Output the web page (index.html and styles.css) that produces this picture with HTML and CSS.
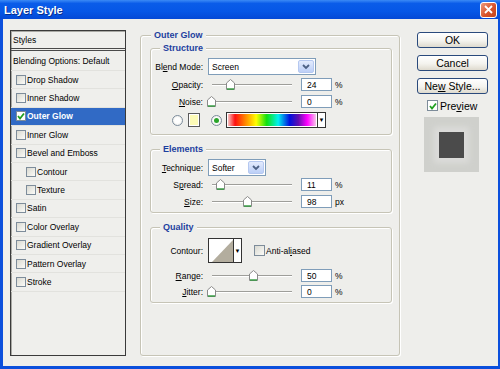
FILE: index.html
```html
<!DOCTYPE html>
<html lang="en">
<head>
  <meta charset="UTF-8" />
  <title>Layer Style</title>
  <link rel="stylesheet" href="styles.css">
</head>
<body>
  <div class="window">
    <div class="titlebar">
      <span class="title">Layer Style</span>
      <span class="close">
        <svg width="9" height="9" viewBox="0 0 9 9"><path d="M1 1 L8 8 M8 1 L1 8" stroke="#fff" stroke-width="1.8" fill="none"/></svg>
      </span>
    </div>

    <div class="dialog">
      <!-- Styles list -->
      <ul class="style-list">
        <li class="head first">Styles</li>
        <li class="head">Blending Options: Default</li>
        <li><span class="check"></span>Drop Shadow</li>
        <li><span class="check"></span>Inner Shadow</li>
        <li class="selected"><span class="check on"><svg width="8" height="8" viewBox="0 0 8 8"><path d="M1 4 L3 6.5 L7 1.5" stroke="#21a121" stroke-width="1.8" fill="none"/></svg></span>Outer Glow</li>
        <li><span class="check"></span>Inner Glow</li>
        <li><span class="check"></span>Bevel and Emboss</li>
        <li class="sub"><span class="check"></span>Contour</li>
        <li class="sub"><span class="check"></span>Texture</li>
        <li><span class="check"></span>Satin</li>
        <li><span class="check"></span>Color Overlay</li>
        <li><span class="check"></span>Gradient Overlay</li>
        <li><span class="check"></span>Pattern Overlay</li>
        <li><span class="check"></span>Stroke</li>
      </ul>

      <!-- Outer Glow settings -->
      <div class="main">
        <span class="group-title">Outer Glow</span>

        <div class="group">
          <span class="group-title">Structure</span>
          <div class="row tall">
            <label class="lbl">Bl<u>e</u>nd Mode:</label>
            <div class="select blend">
              <span class="val">Screen</span>
              <span class="drop"><svg width="8" height="6" viewBox="0 0 8 6"><path d="M1 1 L4 4 L7 1" stroke="#4d6185" stroke-width="1.8" fill="none"/></svg></span>
            </div>
          </div>
          <div class="row gap3">
            <label class="lbl"><u>O</u>pacity:</label>
            <div class="slider"><span class="track"></span><svg class="thumb" style="left:17.5px" width="9" height="11" viewBox="0 0 9 11"><path d="M0.5 4 L4.5 0.5 L8.5 4 L8.5 10.5 L0.5 10.5 Z" fill="#fff" stroke="#8a8a8a"/><path d="M1 10 L8 10" stroke="#2f9a3c" stroke-width="1.4"/></svg></div>
            <span class="num">24</span><span class="unit">%</span>
          </div>
          <div class="row">
            <label class="lbl"><u>N</u>oise:</label>
            <div class="slider"><span class="track"></span><svg class="thumb" style="left:-1.5px" width="9" height="11" viewBox="0 0 9 11"><path d="M0.5 4 L4.5 0.5 L8.5 4 L8.5 10.5 L0.5 10.5 Z" fill="#fff" stroke="#8a8a8a"/><path d="M1 10 L8 10" stroke="#2f9a3c" stroke-width="1.4"/></svg></div>
            <span class="num">0</span><span class="unit">%</span>
          </div>
          <div class="row colors">
            <span class="radio"></span>
            <span class="swatch"></span>
            <span class="radio on"></span>
            <div class="gradient">
              <span class="spectrum"></span>
              <span class="arrow">&#9660;</span>
            </div>
          </div>
        </div>

        <div class="group">
          <span class="group-title">Elements</span>
          <div class="row tall">
            <label class="lbl"><u>T</u>echnique:</label>
            <div class="select technique">
              <span class="val">Softer</span>
              <span class="drop"><svg width="8" height="6" viewBox="0 0 8 6"><path d="M1 1 L4 4 L7 1" stroke="#4d6185" stroke-width="1.8" fill="none"/></svg></span>
            </div>
          </div>
          <div class="row gap2">
            <label class="lbl">S<u>p</u>read:</label>
            <div class="slider"><span class="track"></span><svg class="thumb" style="left:7.5px" width="9" height="11" viewBox="0 0 9 11"><path d="M0.5 4 L4.5 0.5 L8.5 4 L8.5 10.5 L0.5 10.5 Z" fill="#fff" stroke="#8a8a8a"/><path d="M1 10 L8 10" stroke="#2f9a3c" stroke-width="1.4"/></svg></div>
            <span class="num">11</span><span class="unit">%</span>
          </div>
          <div class="row">
            <label class="lbl"><u>S</u>ize:</label>
            <div class="slider"><span class="track"></span><svg class="thumb" style="left:34.5px" width="9" height="11" viewBox="0 0 9 11"><path d="M0.5 4 L4.5 0.5 L8.5 4 L8.5 10.5 L0.5 10.5 Z" fill="#fff" stroke="#8a8a8a"/><path d="M1 10 L8 10" stroke="#2f9a3c" stroke-width="1.4"/></svg></div>
            <span class="num">98</span><span class="unit">px</span>
          </div>
        </div>

        <div class="group">
          <span class="group-title">Quality</span>
          <div class="row contour-row">
            <label class="lbl">Contour:</label>
            <div class="contour">
              <svg width="24" height="23" viewBox="0 0 24 23"><path d="M3 23 L24 1 L24 23 Z" fill="#b3ad9e"/></svg>
              <span class="arrow">&#9660;</span>
            </div>
            <span class="check anti"></span><span>Anti-al<u>i</u>ased</span>
          </div>
          <div class="row gap6">
            <label class="lbl"><u>R</u>ange:</label>
            <div class="slider"><span class="track"></span><svg class="thumb" style="left:40.5px" width="9" height="11" viewBox="0 0 9 11"><path d="M0.5 4 L4.5 0.5 L8.5 4 L8.5 10.5 L0.5 10.5 Z" fill="#fff" stroke="#8a8a8a"/><path d="M1 10 L8 10" stroke="#2f9a3c" stroke-width="1.4"/></svg></div>
            <span class="num">50</span><span class="unit">%</span>
          </div>
          <div class="row gap3">
            <label class="lbl"><u>J</u>itter:</label>
            <div class="slider"><span class="track"></span><svg class="thumb" style="left:-1.5px" width="9" height="11" viewBox="0 0 9 11"><path d="M0.5 4 L4.5 0.5 L8.5 4 L8.5 10.5 L0.5 10.5 Z" fill="#fff" stroke="#8a8a8a"/><path d="M1 10 L8 10" stroke="#2f9a3c" stroke-width="1.4"/></svg></div>
            <span class="num">0</span><span class="unit">%</span>
          </div>
        </div>
      </div>

      <!-- Buttons and preview -->
      <div class="side">
        <button class="btn"><span>OK</span></button>
        <button class="btn"><span>Cancel</span></button>
        <button class="btn last"><span>Ne<u>w</u> Style...</span></button>
        <div class="preview-row">
          <span class="check on"><svg width="8" height="8" viewBox="0 0 8 8"><path d="M1 4 L3 6.5 L7 1.5" stroke="#21a121" stroke-width="1.8" fill="none"/></svg></span>
          <span>Pre<u>v</u>iew</span>
        </div>
        <div class="preview"><span class="preview-square"></span></div>
      </div>
    </div>
  </div>
</body>
</html>
```

FILE: styles.css
```css
/* Reset */
* {
  margin: 0;
  padding: 0;
  box-sizing: border-box;
}
body {
  font-family: 'Liberation Sans', Arial, sans-serif;
  font-size: 8.5px;
  color: #000;
  background: #fff;
}
u {
  text-underline-offset: 1px;
}

/* Window frame */
.window {
  width: 500px;
  height: 369px;
  background: #0b4fdc;
  display: flex;
  flex-direction: column;
}
.titlebar {
  height: 19px;
  display: flex;
  align-items: center;
  justify-content: space-between;
  padding: 0 3px 0 4px;
  background: linear-gradient(#3b8af5, #0a5ce9 18%, #0657e6 60%, #0449d6);
}
.title {
  color: #fff;
  font-weight: bold;
  font-size: 11px;
  text-shadow: 1px 1px #0a2f8c;
}
.close {
  width: 17px;
  height: 16px;
  border: 1px solid #fff;
  border-radius: 3px;
  background: linear-gradient(135deg, #ec9a7c, #d9532b 55%, #c0451c);
  display: flex;
  align-items: center;
  justify-content: center;
}
.dialog {
  flex: 1;
  margin: 0 2px 3px 3px;
  background: #eeeeeb;
  display: flex;
  align-items: flex-start;
  padding: 11px 0 0 7px;
}

/* Styles list */
.style-list {
  list-style: none;
  width: 116px;
  height: 326px;
  border: 1px solid #3a3a3a;
  background: #efefec;
  box-shadow: inset 1px 1px #a9a9a4;
}
.style-list li {
  height: 18.4px;
  display: flex;
  align-items: center;
  padding-left: 5px;
  border-bottom: 1px solid #e2e2de;
  white-space: nowrap;
}
.style-list .head {
  height: 20px;
  padding-left: 2px;
}
.style-list .first {
  border-bottom: 3px double #4a4a4a;
}
.style-list .sub {
  padding-left: 15px;
}
.style-list .selected {
  background: #316ac5;
  color: #fff;
  font-weight: bold;
}
.check {
  width: 10px;
  height: 10px;
  flex-shrink: 0;
  border: 1px solid #7d8c9a;
  background: linear-gradient(135deg, #d9d9d1, #fbfbf8);
  margin-right: 1px;
  display: flex;
  align-items: center;
  justify-content: center;
}
.check.on {
  background: #fff;
}

/* Group boxes */
.main {
  width: 260px;
  height: 321px;
  margin: 5px 0 0 14px;
  border: 1px solid #c6c4b6;
  border-radius: 3px;
  box-shadow: inset 1px 1px #fff, 1px 1px #fff;
  padding: 0 7px 0 9px;
}
.group-title {
  display: block;
  width: max-content;
  margin: -6px 0 0 9px;
  padding: 0 3px;
  line-height: 11px;
  background: #eeeeeb;
  color: #1d3f9f;
  font-weight: bold;
  font-size: 9px;
}
.main > .group-title {
  margin-left: 1px;
}
.group {
  margin-top: 14px;
  border: 1px solid #c6c4b6;
  border-radius: 3px;
  box-shadow: inset 1px 1px #fff, 1px 1px #fff;
  padding-bottom: 4px;
}
.main > .group:first-of-type {
  margin-top: 7px;
  padding-bottom: 6px;
}

/* Rows */
.row {
  display: flex;
  align-items: center;
  height: 13px;
  margin-top: 4px;
  white-space: nowrap;
}
.row.tall {
  height: 17px;
}
.row.gap2 { margin-top: 2px; }
.row.gap3 { margin-top: 3px; }
.row.gap6 { margin-top: 6px; }
.lbl {
  width: 52px;
  text-align: right;
  margin-right: 5px;
}

/* Select boxes */
.select {
  display: flex;
  height: 17px;
  border: 1px solid #7f9db9;
  background: #fff;
}
.select.blend { width: 108px; }
.select.technique { width: 58px; }
.select .val {
  flex: 1;
  padding-left: 3px;
  display: flex;
  align-items: center;
}
.select .drop {
  width: 16px;
  margin: 1px;
  border: 1px solid #b5c8f0;
  border-radius: 2px;
  background: linear-gradient(#e3ebfd, #bccff7);
  display: flex;
  align-items: center;
  justify-content: center;
}

/* Sliders */
.slider {
  position: relative;
  width: 88px;
  height: 13px;
  display: flex;
  align-items: center;
  padding: 0 4px;
}
.track {
  flex: 1;
  height: 2px;
  border-top: 1px solid #9e9e9a;
  border-bottom: 1px solid #fff;
}
.thumb {
  position: absolute;
  top: 1px;
}
.num {
  width: 31px;
  height: 13px;
  margin-left: 5px;
  padding-left: 5px;
  border: 1px solid #7f9db9;
  background: #fff;
  display: flex;
  align-items: center;
}
.unit {
  margin-left: 3px;
}

/* Colour row */
.row.colors {
  height: 16px;
  padding-left: 21px;
}
.radio {
  width: 11px;
  height: 11px;
  border-radius: 50%;
  border: 1px solid #7c8c9c;
  background: radial-gradient(#fff 40%, #e2e2dc);
  display: flex;
  align-items: center;
  justify-content: center;
}
.radio.on {
  margin-left: 11px;
}
.radio.on::after {
  content: '';
  width: 5px;
  height: 5px;
  border-radius: 50%;
  background: #2aa52a;
}
.swatch {
  width: 12px;
  height: 14px;
  margin-left: 5px;
  border: 1px solid #5a5a5a;
  box-shadow: inset 0 0 0 1px #fff;
  background: #fdfbb6;
}
.gradient {
  width: 100px;
  height: 16px;
  margin-left: 4px;
  border: 1px solid #333;
  display: flex;
}
.spectrum {
  flex: 1;
  border: 1px solid #fff;
  background: linear-gradient(to right, #f6c2c2, #ff1010 8%, #ff8a00 20%, #ffff00 32%, #10e010 44%, #00f0f0 57%, #0010e0 70%, #6010b0 80%, #ff00ff 90%, #f7c6ea);
}
.arrow {
  width: 8px;
  font-size: 6px;
  border-left: 1px solid #333;
  background: #fff;
  display: flex;
  align-items: center;
  justify-content: center;
}

/* Contour row */
.row.contour-row {
  height: 25px;
  margin-top: 5px;
}
.contour {
  width: 34px;
  height: 25px;
  border: 1px solid #333;
  background: #fff;
  display: flex;
}
.contour svg {
  flex-shrink: 0;
}
.check.anti {
  width: 11px;
  height: 11px;
  margin: 0 1px 0 12px;
}

/* Side column */
.side {
  width: 71px;
  margin: 2px 0 0 17px;
  display: flex;
  flex-direction: column;
}
.btn {
  height: 16px;
  margin-bottom: 7px;
  border: 1px solid #2a4a7c;
  border-radius: 3px;
  background: linear-gradient(#fff, #f4f3ee 55%, #dedace);
  font-family: 'Liberation Sans', Arial, sans-serif;
  font-size: 10.5px;
  color: #000;
  display: flex;
  align-items: center;
  justify-content: center;
}
.btn.last {
  margin-bottom: 6px;
}
.preview-row {
  height: 11px;
  display: flex;
  align-items: center;
  padding-left: 10px;
  font-size: 10.5px;
  gap: 1px;
}
.preview-row .check {
  width: 11px;
  height: 11px;
}
.preview {
  width: 55px;
  height: 55px;
  margin: 6px 0 0 7px;
  background: #cfd0cc;
  display: flex;
  align-items: center;
  justify-content: center;
}
.preview-square {
  width: 25px;
  height: 26px;
  background: #4b4b4b;
  box-shadow: 0 0 6px 5px #dcdcda;
}
```
